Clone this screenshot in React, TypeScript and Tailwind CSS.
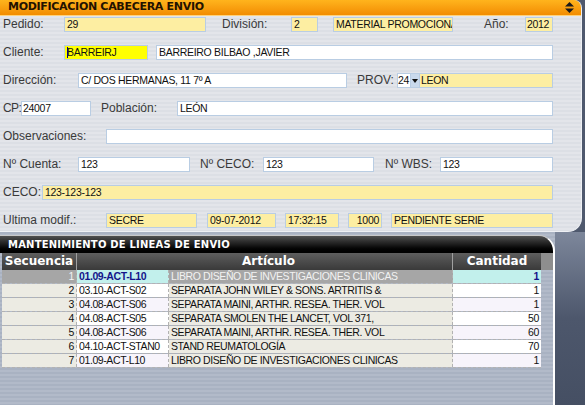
import React from 'react';
import clsx from 'clsx';

const Label = ({ text, w, className }: { text: string; w: string; className?: string }) => (
  <span
    className={clsx(
      "shrink-0 whitespace-nowrap font-['Liberation_Sans',Arial,sans-serif] text-[12px] leading-[15px] text-[#3a3a3a]",
      w,
      className
    )}
  >
    {text}
  </span>
);

const Box = ({
  v,
  w,
  tone = 'white',
  right,
  className,
  children,
}: {
  v?: string;
  w: string;
  tone?: 'white' | 'soft' | 'bright';
  right?: boolean;
  className?: string;
  children?: React.ReactNode;
}) => (
  <div
    className={clsx(
      "h-[15px] shrink-0 overflow-hidden whitespace-nowrap border border-[#b9cde3] font-['Liberation_Sans',Arial,sans-serif] text-[10.5px] leading-[13px] tracking-[-0.3px] text-[#111]",
      tone === 'soft' && 'bg-[#fdeea2]',
      tone === 'bright' && 'bg-[#ffff00]',
      tone === 'white' && 'bg-white',
      right && 'text-right',
      w,
      className ?? 'px-[2px]'
    )}
  >
    {children}
    {v}
  </div>
);

const lines = [
  { sec: '1', code: '01.09-ACT-L10', art: 'LIBRO DISEÑO DE INVESTIGACIONES CLINICAS', qty: '1' },
  { sec: '2', code: '03.10-ACT-S02', art: 'SEPARATA JOHN WILEY & SONS. ARTRITIS &', qty: '1' },
  { sec: '3', code: '04.08-ACT-S06', art: 'SEPARATA MAINI, ARTHR. RESEA. THER. VOL', qty: '1' },
  { sec: '4', code: '04.08-ACT-S05', art: 'SEPARATA SMOLEN THE LANCET, VOL 371,', qty: '50' },
  { sec: '5', code: '04.08-ACT-S06', art: 'SEPARATA MAINI, ARTHR. RESEA. THER. VOL', qty: '60' },
  { sec: '6', code: '04.10-ACT-STAN0', art: 'STAND REUMATOLOGÍA', qty: '70' },
  { sec: '7', code: '01.09-ACT-L10', art: 'LIBRO DISEÑO DE INVESTIGACIONES CLINICAS', qty: '1' },
];

const App = () => {
  return (
    <div className="flex h-[405px] w-[585px] flex-col overflow-hidden bg-[#4f596e]">
      {/* Cabecera */}
      <div className="h-[232px] w-[582px] shrink-0 overflow-hidden rounded-tr-[8px] rounded-br-[14px] border-r border-b border-[#eef0f4] bg-[image:repeating-linear-gradient(180deg,#e3e5ea_0px,#e3e5ea_2px,#dcdfe5_2px,#dcdfe5_4px)]">
        <div className="flex h-[16px] items-center justify-between border-b border-[#ffd27a] bg-linear-to-b from-[#ffb41c] to-[#f28c00] pl-[8px] pr-[7px]">
          <span className="font-['DejaVu_Sans',sans-serif] text-[11px] font-bold tracking-[-0.3px] text-[#231200]">
            MODIFICACION CABECERA ENVIO
          </span>
          <svg width="9" height="11" viewBox="0 0 9 11">
            <polygon points="4.5,0 9,4.5 0,4.5" fill="#1a1a1a" />
            <polygon points="0,6.5 9,6.5 4.5,11" fill="#1a1a1a" />
          </svg>
        </div>

        <div className="flex h-[28px] items-start pl-[3px] pt-[1px]">
          <Label text="Pedido:" w="w-[61px]" />
          <Box v="29" w="w-[142px]" tone="soft" />
          <Label text="División:" w="w-[69px]" className="ml-[16px]" />
          <Box v="2" w="w-[27px]" tone="soft" />
          <Box v="MATERIAL PROMOCIONAL" w="w-[120px]" tone="soft" className="ml-[15px] px-[2px]" />
          <Label text="Año:" w="w-[41px]" className="ml-[31px]" />
          <Box v="2012" w="w-[28px]" tone="soft" className="px-[1px]" />
        </div>

        <div className="flex h-[28px] items-start pl-[3px] pt-[1px]">
          <Label text="Cliente:" w="w-[61px]" />
          <Box v="BARREIRJ" w="w-[84px]" tone="bright">
            <span className="mr-[-1px] inline-block h-[11px] w-[1px] translate-y-[1px] bg-[#000080] align-top" />
          </Box>
          <Box v="BARREIRO BILBAO ,JAVIER" w="w-[397px]" className="ml-[8px] px-[2px]" />
        </div>

        <div className="flex h-[28px] items-start pl-[3px] pt-[1px]">
          <Label text="Dirección:" w="w-[75px]" />
          <Box v="C/ DOS HERMANAS, 11 7º A" w="w-[269px]" />
          <Label text="PROV:" w="w-[40px]" className="ml-[10px]" />
          <Box v="24" w="w-[14px]" className="px-0" />
          <div className="flex h-[15px] w-[8px] shrink-0 items-center justify-center border-y border-[#b9cde3] bg-[#c9d9ec]">
            <svg width="6" height="4" viewBox="0 0 6 4">
              <polygon points="0,0 6,0 3,4" fill="#111" />
            </svg>
          </div>
          <Box v="LEON" w="w-[134px]" tone="soft" className="px-[1px]" />
        </div>

        <div className="flex h-[28px] items-start pl-[3px] pt-[1px]">
          <Label text="CP:" w="w-[18px]" className="tracking-[-0.6px]" />
          <Box v="24007" w="w-[70px]" className="px-[1px]" />
          <Label text="Población:" w="w-[76px]" className="ml-[10px]" />
          <Box v="LEÓN" w="w-[376px]" />
        </div>

        <div className="flex h-[28px] items-start pl-[3px] pt-[1px]">
          <Label text="Observaciones:" w="w-[103px]" />
          <Box w="w-[447px]" />
        </div>

        <div className="flex h-[28px] items-start pl-[3px] pt-[1px]">
          <Label text="Nº Cuenta:" w="w-[75px]" />
          <Box v="123" w="w-[112px]" />
          <Label text="Nº CECO:" w="w-[63px]" className="ml-[10px]" />
          <Box v="123" w="w-[111px]" />
          <Label text="Nº WBS:" w="w-[55px]" className="ml-[11px]" />
          <Box v="123" w="w-[113px]" />
        </div>

        <div className="flex h-[28px] items-start pl-[3px] pt-[1px]">
          <Label text="CECO:" w="w-[39px]" />
          <Box v="123-123-123" w="w-[511px]" tone="soft" />
        </div>

        <div className="flex h-[28px] items-start pl-[3px] pt-[1px]">
          <Label text="Ultima modif.:" w="w-[103px]" />
          <Box v="SECRE" w="w-[91px]" tone="soft" />
          <Box v="09-07-2012" w="w-[69px]" tone="soft" className="ml-[10px] px-[2px]" />
          <Box v="17:32:15" w="w-[54px]" tone="soft" className="ml-[9px] px-[2px]" />
          <Box v="1000" w="w-[34px]" tone="soft" right className="ml-[9px] px-[2px]" />
          <Box v="PENDIENTE SERIE" w="w-[162px]" tone="soft" className="ml-[9px] px-[2px]" />
        </div>
      </div>

      {/* Líneas */}
      <div className="flex flex-1 bg-[image:repeating-linear-gradient(180deg,#a9b2c2_0px,#a9b2c2_2px,#b2bac9_2px,#b2bac9_4px)]">
        <div className="flex w-[555px] shrink-0 flex-col pt-[3px]">
          <div className="flex h-[18px] items-center rounded-tr-[16px] border-t border-r-2 border-t-[#c8c8c8] border-r-white bg-linear-to-b from-[#505050] via-[#1c1c1c] to-black pl-[8px]">
            <span className="font-['DejaVu_Sans',sans-serif] text-[10px] font-bold tracking-[0.2px] text-white">
              MANTENIMIENTO DE LINEAS DE ENVIO
            </span>
          </div>
          <div className="flex-1 border-r-2 border-white pl-[2px]">
            <div className="flex h-[17px] bg-[#8e8e8e]">
              <div className="flex w-[539px] bg-linear-to-b from-[#5e5e5e] to-[#3a3a3a] font-['DejaVu_Sans',sans-serif] text-[12px] font-bold leading-[17px] text-white">
                <div className="w-[75px] border-r border-[#a0a0a0] text-center">Secuencia</div>
                <div className="w-[376px] border-r border-[#a0a0a0] pl-[8px] text-center">Artículo</div>
                <div className="w-[88px] text-center">Cantidad</div>
              </div>
            </div>
            {lines.map((row, i) => {
              const sel = i === 0;
              const alt = i % 2 === 0 ? 'bg-[#f7f4fb]' : 'bg-white';
              return (
                <div
                  key={i}
                  className="flex h-[14px] w-[539px] border-b border-dashed border-[#b2b2b2] font-['Liberation_Sans',Arial,sans-serif] text-[10.5px] leading-[13px] tracking-[-0.4px]"
                >
                  <div
                    className={clsx(
                      'w-[75px] border-r border-dashed border-[#b2b2b2] pr-[2px] text-right',
                      sel ? 'bg-[#a6a6a6] text-[#f2f2f2]' : 'bg-[#ecebe3] text-[#111]'
                    )}
                  >
                    {row.sec}
                  </div>
                  <div
                    className={clsx(
                      'w-[92px] overflow-hidden whitespace-nowrap border-r border-dashed border-[#b2b2b2] pl-[2px]',
                      sel ? 'bg-[#c2f0ec] font-bold text-[#14148a]' : clsx(alt, 'text-[#111]')
                    )}
                  >
                    {row.code}
                  </div>
                  <div
                    className={clsx(
                      'w-[284px] overflow-hidden whitespace-nowrap border-r border-dashed border-[#b2b2b2] pl-[2px]',
                      sel ? 'bg-[#a6a6a6] text-[#f2f2f2]' : 'bg-[#ecebe3] text-[#111]'
                    )}
                  >
                    {row.art}
                  </div>
                  <div
                    className={clsx(
                      'w-[88px] pr-[2px] text-right',
                      sel ? 'bg-[#c2f0ec] font-bold text-[#14148a]' : clsx(alt, 'text-[#111]')
                    )}
                  >
                    {row.qty}
                  </div>
                </div>
              );
            })}
          </div>
        </div>
        <div className="flex-1 bg-linear-to-b from-[#7d879b] via-[#4d576c] to-[#454f63]" />
      </div>
    </div>
  );
};

export default App;
